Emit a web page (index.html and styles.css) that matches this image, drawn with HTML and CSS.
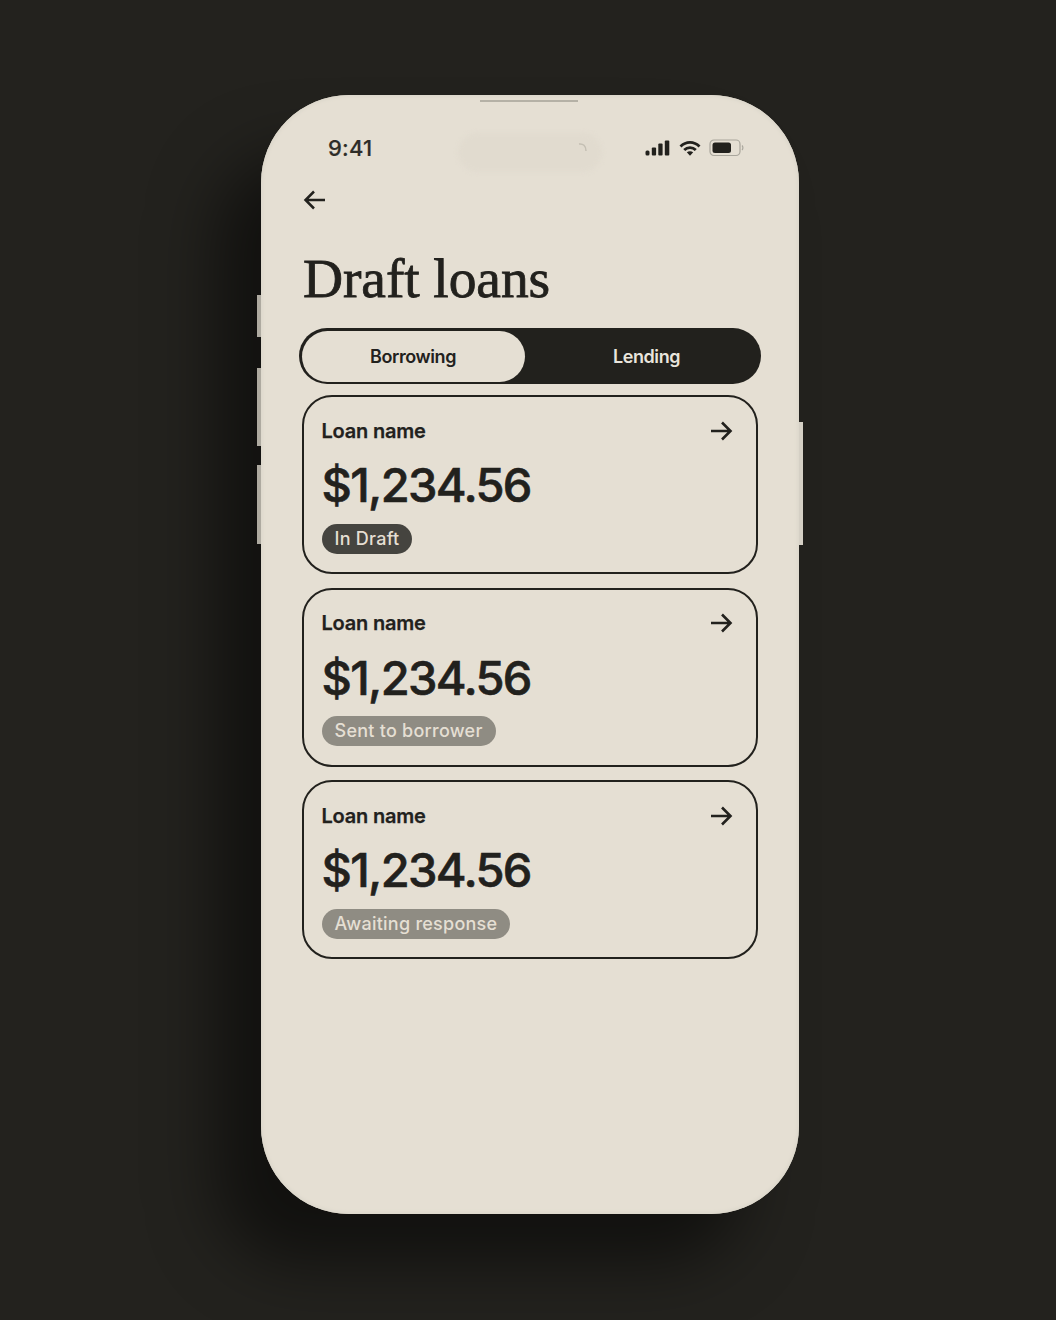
FILE: index.html
```html
<!DOCTYPE html>
<html lang="en">
<head>
<meta charset="utf-8">
<title>Draft loans</title>
<link rel="stylesheet" href="styles.css">
</head>
<body>
<div class="phone">
  <span class="btn btn-a"></span>
  <span class="btn btn-b"></span>
  <span class="btn btn-c"></span>
  <span class="btn btn-d"></span>
  <span class="speaker"></span>
  <span class="island"></span>
  <svg class="lens" width="12" height="14" viewBox="0 0 12 14"><path d="M2 2C6 1.500 9 3.500 9 9" fill="none" stroke="#c4bfb3" stroke-width="1.500"/></svg>
  <div class="status">
    <span class="time">9:41</span>
    <div class="status-icons">
      <svg class="ic-signal" width="25" height="16" viewBox="0 0 25 16"><rect x="0.500" y="10.500" width="4" height="5" rx="1.500"/><rect x="6.800" y="7.500" width="4.300" height="8" rx="1"/><rect x="13.300" y="3.500" width="4.300" height="12" rx="1"/><rect x="19.800" y="0.500" width="4.500" height="15" rx="1"/></svg>
      <svg class="ic-wifi" width="22" height="16" viewBox="0 0 22 16"><path d="M1.500 6.500C7 1 15 1 20.500 6.500M5.200 10C8.500 6.800 13.500 6.800 16.800 10" fill="none" stroke="#22211d" stroke-width="2.800"/><path d="M7.800 12.300C9.500 10.800 12.500 10.800 14.200 12.300L11 15.800Z" fill="#22211d"/></svg>
      <svg class="ic-batt" width="35" height="18" viewBox="0 0 35 18"><rect x="1" y="1" width="30" height="15.500" rx="4" fill="none" stroke="#a9a69c" stroke-width="1.200"/><rect x="3.500" y="3.500" width="18.500" height="10.500" rx="2.500" fill="#22211d"/><path d="M33 6.500C34.200 7.500 34.200 10 33 11" fill="none" stroke="#a9a69c" stroke-width="1.200"/></svg>
    </div>
  </div>
  <svg class="back" width="24" height="24" viewBox="0 0 24 24"><path d="M22 12H2.500M11 3.500L2.500 12L11 20.500" fill="none" stroke="#22211d" stroke-width="2.500"/></svg>
  <h1 class="title">Draft loans</h1>
  <div class="tabs">
    <div class="tab tab-on">Borrowing</div>
    <div class="tab tab-off">Lending</div>
  </div>
  <div class="cards">
    <div class="card">
      <div class="card-top"><span class="name">Loan name</span>
        <svg class="arrow" width="24" height="24" viewBox="0 0 24 24"><path d="M2 12H21.500M13 3.500L21.500 12L13 20.500" fill="none" stroke="#22211d" stroke-width="2.600"/></svg></div>
      <div class="amount">$1,234.56</div>
      <span class="pill pill-dark">In Draft</span>
    </div>
    <div class="card">
      <div class="card-top"><span class="name">Loan name</span>
        <svg class="arrow" width="24" height="24" viewBox="0 0 24 24"><path d="M2 12H21.500M13 3.500L21.500 12L13 20.500" fill="none" stroke="#22211d" stroke-width="2.600"/></svg></div>
      <div class="amount">$1,234.56</div>
      <span class="pill pill-grey">Sent to borrower</span>
    </div>
    <div class="card">
      <div class="card-top"><span class="name">Loan name</span>
        <svg class="arrow" width="24" height="24" viewBox="0 0 24 24"><path d="M2 12H21.500M13 3.500L21.500 12L13 20.500" fill="none" stroke="#22211d" stroke-width="2.600"/></svg></div>
      <div class="amount">$1,234.56</div>
      <span class="pill pill-grey">Awaiting response</span>
    </div>
  </div>
</div>
</body>
</html>
```
FILE: styles.css
```css
* { box-sizing: border-box; }
html, body { margin: 0; height: 1320px; overflow: hidden; }
body {
  background: #23221e;
  padding: 95px 0 0 261px;
  font-family: Inter, "Liberation Sans", sans-serif;
  color: #22211d;
}
.phone {
  position: relative;
  width: 538px;
  height: 1119px;
  border-radius: 88px;
  background: #e5dfd3;
  box-shadow: -50px 55px 65px -5px rgba(0,0,0,.5), inset 0 0 3px 2px #ddd8cc;
  padding: 38px 38px 0 42px;
  display: flex;
  flex-direction: column;
}
.btn { position: absolute; width: 4px; background: #aeaaa0; }
.btn-a { left: -4px; top: 200px; height: 42px; }
.btn-b { left: -4px; top: 273px; height: 78px; }
.btn-c { left: -4px; top: 370px; height: 79px; }
.btn-d { right: -4px; top: 327px; height: 123px; background: #d5d0c5; }
.speaker { position: absolute; left: 219px; top: 5px; width: 98px; height: 2px; background: #b5b1a6; }
.island { position: absolute; left: 197px; top: 38px; width: 144px; height: 39px; border-radius: 20px; background: #e1dbcf; filter: blur(2px); }
.lens { position: absolute; left: 316px; top: 47px; }
.status { display: flex; justify-content: space-between; align-items: center; height: 30px; padding: 0 17px 0 25px; position: relative; }
.time { font-size: 22px; font-weight: 500; letter-spacing: .2px; color: #2e2d28; -webkit-text-stroke: .2px #2e2d28; }
.status-icons { display: flex; align-items: center; gap: 8.500px; }
.back { margin: 25px 0 0 0; display: block; flex: none; }
.title {
  margin: 37px 0 0 0;
  font-family: "Liberation Serif", serif;
  font-weight: 400;
  font-size: 55.500px;
  line-height: 60px;
  letter-spacing: -.1px;
  -webkit-text-stroke: .8px #22211d;
  white-space: nowrap;
}
.tabs {
  margin: 19px 0 0 -4px;
  width: 462px;
  height: 56px;
  border-radius: 28px;
  background: #22211d;
  padding: 2.500px;
  display: flex;
  font-size: 18px;
  font-weight: 600;
  letter-spacing: -.4px;
}
.tab { display: flex; align-items: center; justify-content: center; }
.tab-on { width: 223px; background: #e5dfd3; border-radius: 26px; }
.tab-off { flex: 1; padding-left: 10px; color: #e9e5dc; }
.cards { margin: 11px 0 0 -1px; display: flex; flex-direction: column; gap: 13.500px; width: 456px; }
.card {
  height: 179px;
  border: 2.300px solid #22211d;
  border-radius: 30px;
  padding: 21.500px 23px 0 17.500px;
}
.card-top { display: flex; align-items: center; justify-content: space-between; height: 24px; }
.name { font-size: 20px; font-weight: 600; letter-spacing: -.2px; -webkit-text-stroke: .25px #22211d; }
.amount { margin-top: 13.500px; font-size: 47px; line-height: 58px; font-weight: 500; letter-spacing: -1.650px; -webkit-text-stroke: .6px #22211d; }
.pill {
  display: inline-block;
  margin-top: 9.500px;
  height: 30px;
  line-height: 30px;
  padding: 0 13px;
  border-radius: 15px;
  font-size: 18px;
  font-weight: 500;
  letter-spacing: .25px;
  white-space: nowrap;
}
.pill-dark { background: #45443f; color: #e5dfd3; }
.pill-grey { background: #8f8c83; color: #e5dfd3; }
.ic-signal rect { fill: #22211d; }
```
